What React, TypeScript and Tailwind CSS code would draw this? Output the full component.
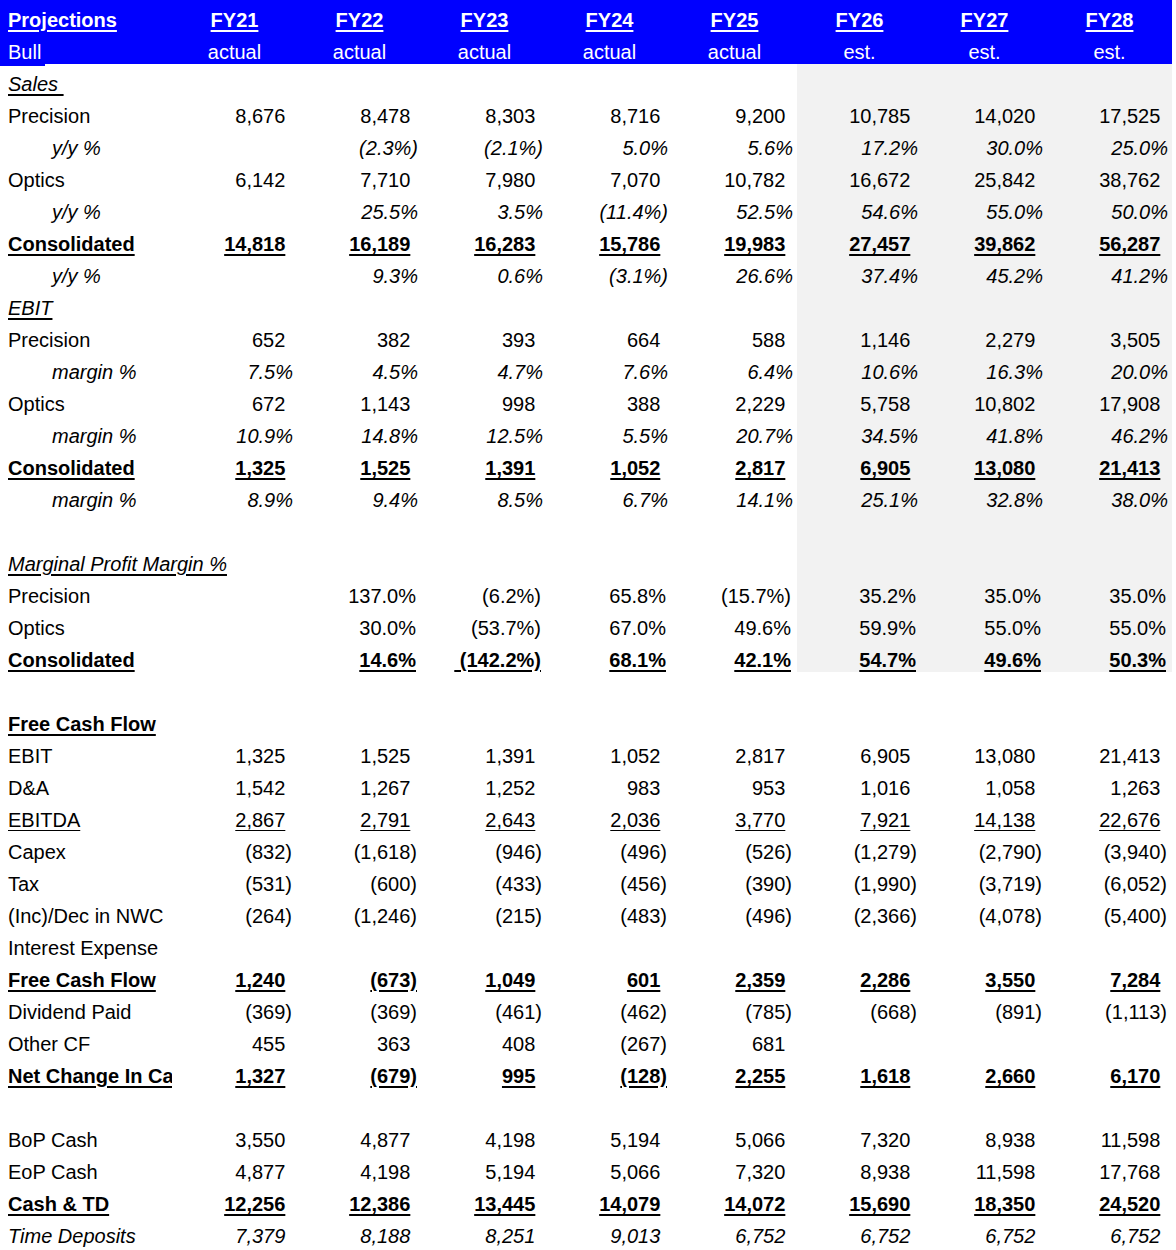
import React from 'react';

type Kind = 'num' | 'pct' | 'ipct' | 'none';
type LabelStyle = 'plain' | 'bold' | 'italicU' | 'u' | 'italic';

interface Row {
  label?: string;
  labelStyle?: LabelStyle;
  indent?: boolean;
  clip?: boolean;
  kind?: Kind;
  bold?: boolean; // bold + underline values
  u?: boolean; // regular underline values
  italic?: boolean;
  values?: string[];
}

const years = ['FY21', 'FY22', 'FY23', 'FY24', 'FY25', 'FY26', 'FY27', 'FY28'];
const status = ['actual', 'actual', 'actual', 'actual', 'actual', 'est.', 'est.', 'est.'];

const rows: Row[] = [
  { label: 'Sales ', labelStyle: 'italicU' },
  { label: 'Precision', kind: 'num', values: ['8,676', '8,478', '8,303', '8,716', '9,200', '10,785', '14,020', '17,525'] },
  { label: 'y/y %', indent: true, kind: 'ipct', values: ['', '(2.3%)', '(2.1%)', '5.0%', '5.6%', '17.2%', '30.0%', '25.0%'] },
  { label: 'Optics', kind: 'num', values: ['6,142', '7,710', '7,980', '7,070', '10,782', '16,672', '25,842', '38,762'] },
  { label: 'y/y %', indent: true, kind: 'ipct', values: ['', '25.5%', '3.5%', '(11.4%)', '52.5%', '54.6%', '55.0%', '50.0%'] },
  { label: 'Consolidated', labelStyle: 'bold', kind: 'num', bold: true, values: ['14,818', '16,189', '16,283', '15,786', '19,983', '27,457', '39,862', '56,287'] },
  { label: 'y/y %', indent: true, kind: 'ipct', values: ['', '9.3%', '0.6%', '(3.1%)', '26.6%', '37.4%', '45.2%', '41.2%'] },
  { label: 'EBIT', labelStyle: 'italicU' },
  { label: 'Precision', kind: 'num', values: ['652', '382', '393', '664', '588', '1,146', '2,279', '3,505'] },
  { label: 'margin %', indent: true, kind: 'ipct', values: ['7.5%', '4.5%', '4.7%', '7.6%', '6.4%', '10.6%', '16.3%', '20.0%'] },
  { label: 'Optics', kind: 'num', values: ['672', '1,143', '998', '388', '2,229', '5,758', '10,802', '17,908'] },
  { label: 'margin %', indent: true, kind: 'ipct', values: ['10.9%', '14.8%', '12.5%', '5.5%', '20.7%', '34.5%', '41.8%', '46.2%'] },
  { label: 'Consolidated', labelStyle: 'bold', kind: 'num', bold: true, values: ['1,325', '1,525', '1,391', '1,052', '2,817', '6,905', '13,080', '21,413'] },
  { label: 'margin %', indent: true, kind: 'ipct', values: ['8.9%', '9.4%', '8.5%', '6.7%', '14.1%', '25.1%', '32.8%', '38.0%'] },
  {},
  { label: 'Marginal Profit Margin %', labelStyle: 'italicU' },
  { label: 'Precision', kind: 'pct', values: ['', '137.0%', '(6.2%)', '65.8%', '(15.7%)', '35.2%', '35.0%', '35.0%'] },
  { label: 'Optics', kind: 'pct', values: ['', '30.0%', '(53.7%)', '67.0%', '49.6%', '59.9%', '55.0%', '55.0%'] },
  { label: 'Consolidated', labelStyle: 'bold', kind: 'pct', bold: true, values: ['', '14.6%', ' (142.2%)', '68.1%', '42.1%', '54.7%', '49.6%', '50.3%'] },
  {},
  { label: 'Free Cash Flow', labelStyle: 'bold' },
  { label: 'EBIT', kind: 'num', values: ['1,325', '1,525', '1,391', '1,052', '2,817', '6,905', '13,080', '21,413'] },
  { label: 'D&A', kind: 'num', values: ['1,542', '1,267', '1,252', '983', '953', '1,016', '1,058', '1,263'] },
  { label: 'EBITDA', labelStyle: 'u', kind: 'num', u: true, values: ['2,867', '2,791', '2,643', '2,036', '3,770', '7,921', '14,138', '22,676'] },
  { label: 'Capex', kind: 'num', values: ['(832)', '(1,618)', '(946)', '(496)', '(526)', '(1,279)', '(2,790)', '(3,940)'] },
  { label: 'Tax', kind: 'num', values: ['(531)', '(600)', '(433)', '(456)', '(390)', '(1,990)', '(3,719)', '(6,052)'] },
  { label: '(Inc)/Dec in NWC', kind: 'num', values: ['(264)', '(1,246)', '(215)', '(483)', '(496)', '(2,366)', '(4,078)', '(5,400)'] },
  { label: 'Interest Expense' },
  { label: 'Free Cash Flow', labelStyle: 'bold', kind: 'num', bold: true, values: ['1,240', '(673)', '1,049', '601', '2,359', '2,286', '3,550', '7,284'] },
  { label: 'Dividend Paid', kind: 'num', values: ['(369)', '(369)', '(461)', '(462)', '(785)', '(668)', '(891)', '(1,113)'] },
  { label: 'Other CF', kind: 'num', values: ['455', '363', '408', '(267)', '681', '', '', ''] },
  { label: 'Net Change In Ca', labelStyle: 'bold', clip: true, kind: 'num', bold: true, values: ['1,327', '(679)', '995', '(128)', '2,255', '1,618', '2,660', '6,170'] },
  {},
  { label: 'BoP Cash', kind: 'num', values: ['3,550', '4,877', '4,198', '5,194', '5,066', '7,320', '8,938', '11,598'] },
  { label: 'EoP Cash', kind: 'num', values: ['4,877', '4,198', '5,194', '5,066', '7,320', '8,938', '11,598', '17,768'] },
  { label: 'Cash & TD', labelStyle: 'bold', kind: 'num', bold: true, values: ['12,256', '12,386', '13,445', '14,079', '14,072', '15,690', '18,350', '24,520'] },
  { label: 'Time Deposits', labelStyle: 'italic', kind: 'num', italic: true, values: ['7,379', '8,188', '8,251', '9,013', '6,752', '6,752', '6,752', '6,752'] },
];

// rows 0..18 of the body get the shaded "est." columns
const SHADED_LAST = 18;

function labelClass(s: LabelStyle | undefined) {
  switch (s) {
    case 'bold':
      return 'font-bold underline decoration-2 underline-offset-[3px]';
    case 'italicU':
      return 'italic underline decoration-[1.5px] underline-offset-[3px]';
    case 'u':
      return 'underline decoration-1 underline-offset-[3px]';
    case 'italic':
      return 'italic';
    default:
      return '';
  }
}

function ValueCell({ row, v, shaded }: { row: Row; v: string; shaded: boolean }) {
  const neg = v.trim().startsWith('(');
  const deco = row.bold
    ? 'font-bold underline decoration-2 underline-offset-[3px]'
    : row.u
      ? 'underline decoration-1 underline-offset-[3px]'
      : '';
  const italic = row.kind === 'ipct' || row.italic ? 'italic' : '';
  return (
    <div
      className={`h-[32px] flex items-end justify-end ${row.kind === 'num' ? 'pr-[5px]' : row.kind === 'ipct' ? 'pr-[4px]' : 'pr-[6px]'} ${shaded ? 'bg-[#f2f2f2]' : ''}`}
    >
      {v && (
        <span className={`whitespace-pre ${italic} ${row.bold ? 'font-bold' : ''}`}>
          <span className={deco}>{v}</span>
          {row.kind === 'num' && !neg && <span className="invisible">)</span>}
        </span>
      )}
    </div>
  );
}

export default function App() {
  return (
    <div className="min-h-screen bg-white text-black font-['Liberation_Sans',Arial,sans-serif] text-[20px] leading-[23px]">
      <div className="grid grid-cols-[172px_repeat(8,125px)] w-[1172px]">
        {/* header */}
        <div className="h-[32px] bg-[#0000ff] text-white flex items-end pl-[8px]">
          <span className="font-bold underline decoration-2 underline-offset-[3px]">Projections</span>
        </div>
        {years.map((y) => (
          <div key={y} className="h-[32px] bg-[#0000ff] text-white flex items-end justify-center">
            <span className="font-bold underline decoration-2 underline-offset-[3px]">{y}</span>
          </div>
        ))}
        <div className="relative h-[32px] bg-[#0000ff] text-white flex items-end pl-[8px]">
          Bull
          <div className="absolute left-0 -bottom-[2px] w-[45px] h-[2px] bg-[#0000ff]" />
        </div>
        {status.map((s, i) => (
          <div key={i} className="h-[32px] bg-[#0000ff] text-white flex items-end justify-center">
            {s}
          </div>
        ))}

        {/* body */}
        {rows.map((row, r) => (
          <React.Fragment key={r}>
            <div
              className={`h-[32px] flex items-end whitespace-nowrap ${row.indent ? 'pl-[52px] italic' : 'pl-[8px]'} ${row.clip ? 'overflow-hidden pr-[1px]' : 'relative z-10'}`}
            >
              {row.label && <span className={`whitespace-pre ${labelClass(row.labelStyle)}`}>{row.label}</span>}
            </div>
            {years.map((_, c) => (
              <ValueCell
                key={c}
                row={row}
                v={row.values ? row.values[c] : ''}
                shaded={c >= 5 && r <= SHADED_LAST}
              />
            ))}
          </React.Fragment>
        ))}
      </div>
    </div>
  );
}
